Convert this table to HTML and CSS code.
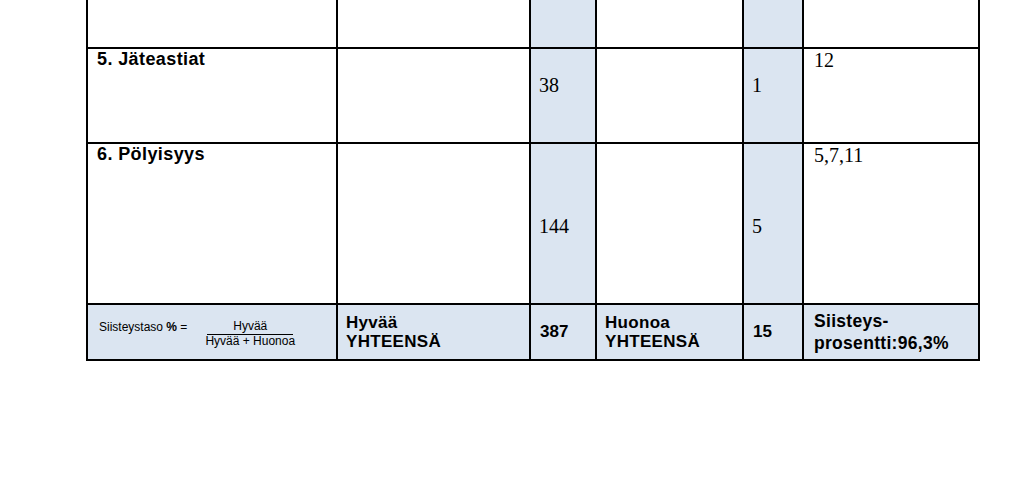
FILE: index.html
```html
<!DOCTYPE html>
<html lang="fi">
<head>
<meta charset="utf-8">
<title>Siisteystaso</title>
<link rel="stylesheet" href="styles.css">
</head>
<body>
<div class="sheet">
  <div class="cell"></div>
  <div class="cell"></div>
  <div class="cell blue"></div>
  <div class="cell"></div>
  <div class="cell blue"></div>
  <div class="cell"></div>

  <div class="cell label">5. Jäteastiat</div>
  <div class="cell"></div>
  <div class="cell blue num num-r2">38</div>
  <div class="cell"></div>
  <div class="cell blue num num-r2">1</div>
  <div class="cell note">12</div>

  <div class="cell label">6. Pölyisyys</div>
  <div class="cell"></div>
  <div class="cell blue num num-r3">144</div>
  <div class="cell"></div>
  <div class="cell blue num num-r3">5</div>
  <div class="cell note">5,7,11</div>

  <div class="cell blue formula">
    <span class="formula-label">Siisteystaso <b>%</b> =</span>
    <span class="frac">
      <span class="frac-top">Hyvää</span>
      <span class="frac-bottom">Hyvää + Huonoa</span>
    </span>
  </div>
  <div class="cell blue total">Hyvää<br>YHTEENSÄ</div>
  <div class="cell blue sum">387</div>
  <div class="cell blue total">Huonoa<br>YHTEENSÄ</div>
  <div class="cell blue sum">15</div>
  <div class="cell blue percent">Siisteys-<br>prosentti:96,3%</div>
</div>
</body>
</html>
```

FILE: styles.css
```css
html, body {
  margin: 0;
  padding: 0;
  background: #ffffff;
}

body {
  width: 1023px;
  height: 482px;
  overflow: hidden;
  color: #000;
  font-family: "Liberation Serif", "Times New Roman", serif;
}

.sheet {
  display: grid;
  grid-template-columns: 248px 191px 64px 145px 58px 174px;
  grid-template-rows: 47px 93px 159px 54px;
  gap: 2px;
  padding: 0 2px 2px 2px;
  margin-left: 86px;
  width: max-content;
  background: #000;
}

.cell {
  background: #ffffff;
  box-sizing: border-box;
  overflow: hidden;
}

.cell.blue {
  background: #dbe5f1;
}

.label {
  font-family: "Liberation Sans", Arial, sans-serif;
  font-weight: bold;
  font-size: 18px;
  line-height: 20px;
  letter-spacing: 0.4px;
  padding: 0 0 0 9px;
}

.num {
  font-size: 20px;
  line-height: 23px;
  padding-left: 8px;
}

.num-r2 {
  padding-top: 25px;
}

.num-r3 {
  padding-top: 71px;
}

.note {
  font-size: 20px;
  line-height: 23px;
  padding: 0 0 0 10px;
}

.formula {
  display: flex;
  align-items: flex-start;
  padding: 15px 0 0 11px;
  font-family: "Liberation Sans", Arial, sans-serif;
  font-size: 12px;
  line-height: 13px;
}

.formula-label {
  margin-top: 1px;
}

.frac {
  display: inline-flex;
  flex-direction: column;
  align-items: center;
  margin-left: 18px;
}

.frac-top {
  padding-bottom: 1px;
  border-bottom: 1px solid #000;
  width: 96%;
  text-align: center;
}

.total {
  font-family: "Liberation Sans", Arial, sans-serif;
  font-weight: bold;
  font-size: 17px;
  line-height: 19px;
  letter-spacing: 0.3px;
  padding: 8px 0 0 8px;
}

.sum {
  font-family: "Liberation Sans", Arial, sans-serif;
  font-weight: bold;
  font-size: 17px;
  line-height: 19px;
  padding: 17px 0 0 9px;
}

.percent {
  font-family: "Liberation Sans", Arial, sans-serif;
  font-weight: bold;
  font-size: 17.5px;
  line-height: 21.5px;
  letter-spacing: 0.3px;
  padding: 6px 0 0 10px;
}
```
